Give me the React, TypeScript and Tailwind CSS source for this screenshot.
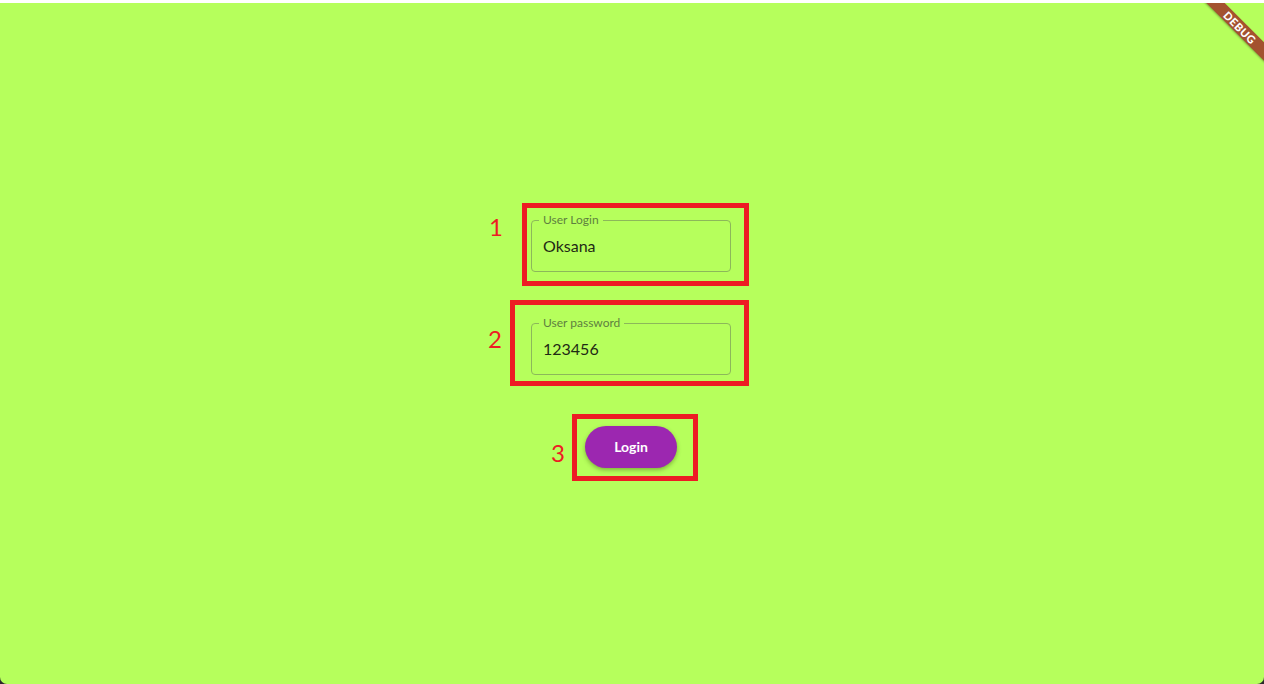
import React from "react";

function Field({ label, value }: { label: string; value: string }) {
  return (
    <div className="relative w-[200px] h-[52px] rounded-[4px] border border-[#8cb85a] flex items-center px-[11px]">
      <span className="absolute left-[7px] top-[-9px] px-[4px] bg-[#b6ff5c] text-[12px] leading-[16px] text-[#5f7f3f]">
        {label}
      </span>
      <span className="text-[16px] leading-[20px] text-[#1f2a14] mt-[1px]">{value}</span>
    </div>
  );
}

function Annotated({
  n,
  children,
  box,
  num,
}: {
  n: string;
  children: React.ReactNode;
  box: string;
  num: string;
}) {
  return (
    <div className="relative">
      {children}
      <div className={`absolute border-[5px] border-[#ed1c24] pointer-events-none ${box}`} />
      <span className={`absolute text-[24px] leading-[30px] text-[#ed1c24] ${num}`}>{n}</span>
    </div>
  );
}

export default function App() {
  return (
    <div
      className="w-[1264px] h-[684px] bg-[#2a2a2a] flex flex-col overflow-hidden"
      style={{ fontFamily: "Lato, 'Noto Sans', sans-serif" }}
    >
      <div className="h-[3px] bg-white shrink-0" />
      <div className="relative flex-1 bg-[#b6ff5c] rounded-b-[7px] flex flex-col items-center justify-center gap-[51px] pr-[2px]">
        <Annotated
          n="1"
          box="left-[-9px] right-[-18px] top-[-17px] bottom-[-14px]"
          num="left-[-42px] top-[-8px]"
        >
          <Field label="User Login" value="Oksana" />
        </Annotated>
        <Annotated
          n="2"
          box="left-[-21px] right-[-18px] top-[-23px] bottom-[-11px]"
          num="left-[-43px] top-[1px]"
        >
          <Field label="User password" value="123456" />
        </Annotated>
        <Annotated
          n="3"
          box="left-[-13px] right-[-21px] top-[-12px] bottom-[-13px]"
          num="left-[-34px] top-[12px]"
        >
          <button className="w-[92px] h-[42px] rounded-full bg-[#9c27b0] text-white text-[14px] font-bold shadow-[0_2px_4px_rgba(60,90,20,0.45)]">
            Login
          </button>
        </Annotated>

        {/* Debug banner */}
        <div className="absolute top-0 right-0 w-[80px] h-[80px] overflow-hidden pointer-events-none">
          <div className="absolute left-[-4px] top-[18px] w-[120px] h-[13px] bg-[#a3522f] rotate-45 flex items-center justify-center shadow-[0_1px_2px_rgba(0,0,0,0.3)]">
            <span className="text-white text-[11px] font-black leading-[13px] tracking-[0.5px]">DEBUG</span>
          </div>
        </div>
      </div>
    </div>
  );
}
